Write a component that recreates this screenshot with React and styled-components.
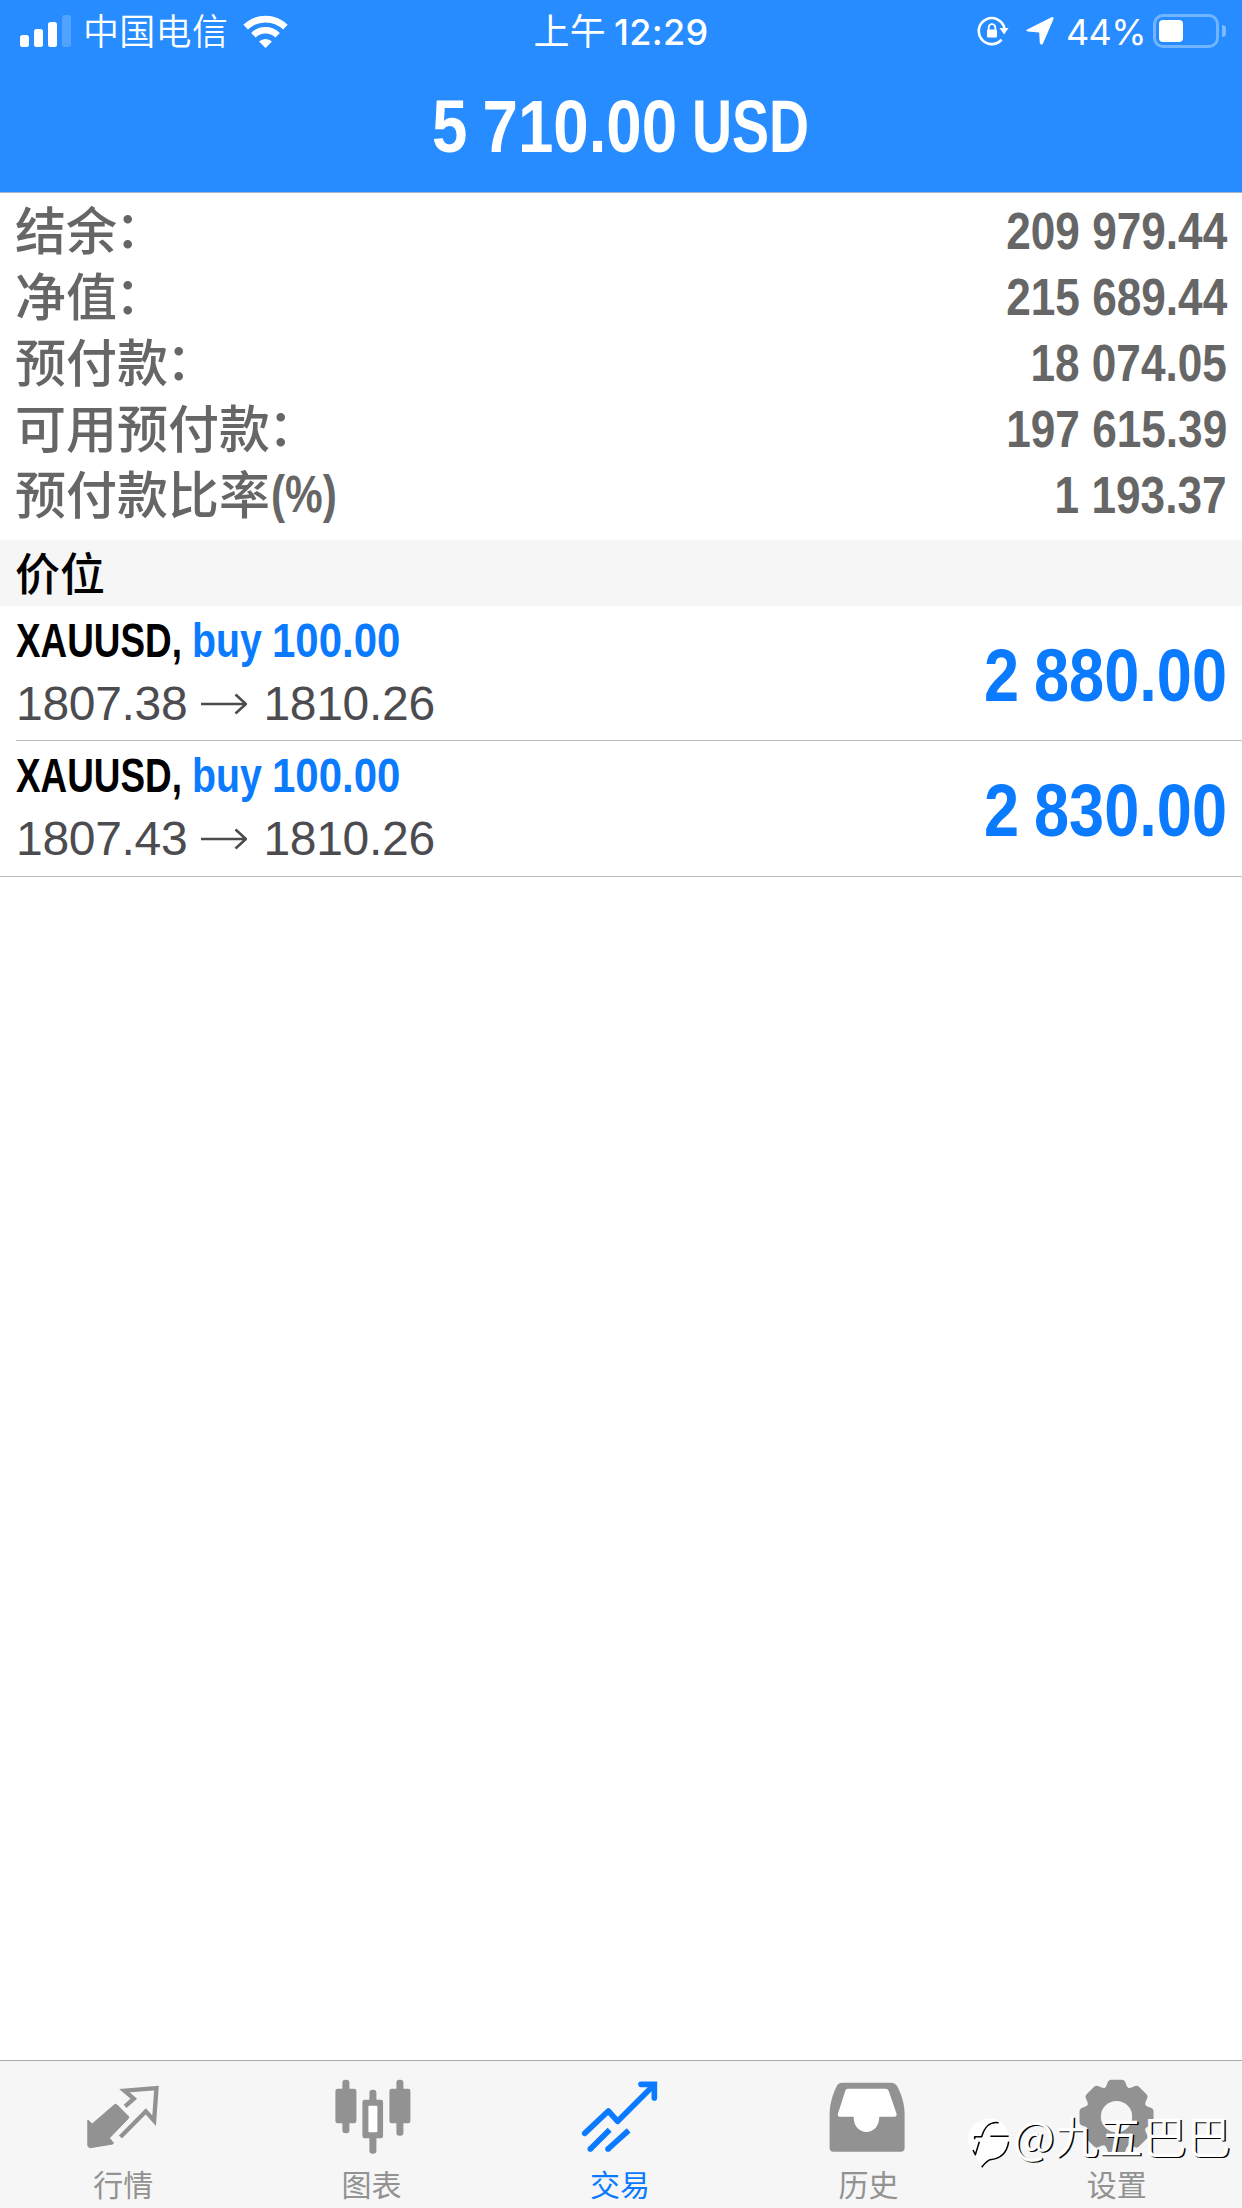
import React from "react";
import styled, { createGlobalStyle } from "styled-components";

const account = [
  { label: "结余", unit: "：", value: "209 979.44" },
  { label: "净值", unit: "：", value: "215 689.44" },
  { label: "预付款", unit: "：", value: "18 074.05" },
  { label: "可用预付款", unit: "：", value: "197 615.39" },
  { label: "预付款比率", unit: "(%)", value: "1 193.37" },
];

const positions = [
  { id: 1, symbol: "XAUUSD", side: "buy", volume: "100.00", open: "1807.38", now: "1810.26", profit: "2 880.00" },
  { id: 2, symbol: "XAUUSD", side: "buy", volume: "100.00", open: "1807.43", now: "1810.26", profit: "2 830.00" },
];

const tabs = [
  { name: "行情", icon: <QuotesIcon /> },
  { name: "图表", icon: <ChartIcon /> },
  { name: "交易", icon: <TradeIcon />, active: true },
  { name: "历史", icon: <HistoryIcon /> },
  { name: "设置", icon: <SettingsIcon /> },
];

function SignalIcon() {
  return (
    <svg width="51" height="32" viewBox="0 0 51 32" fill="#fff">
      <rect x="0" y="20" width="9" height="12" rx="2.5" />
      <rect x="14" y="14" width="9" height="18" rx="2.5" />
      <rect x="28" y="7" width="9" height="25" rx="2.5" />
      <rect x="42" y="0" width="9" height="32" rx="2.5" opacity="0.2" />
    </svg>
  );
}

function WifiIcon() {
  return (
    <svg width="45" height="33" viewBox="0 0 45 33" fill="none" stroke="#fff">
      <path d="M2.6 12.2a28.5 28.5 0 0 1 39.8 0" strokeWidth="6.6" />
      <path d="M10.4 20.2a17.4 17.4 0 0 1 24.2 0" strokeWidth="6.4" />
      <path d="M16 26.5a9.5 9.5 0 0 1 13 0L22.5 33z" fill="#fff" stroke="none" />
    </svg>
  );
}

function LockIcon() {
  return (
    <svg width="32" height="30" viewBox="0 0 32 30" fill="none" stroke="#fff">
      <path d="M24.6 23.6A13 13 0 1 1 27.4 12" strokeWidth="2.6" />
      <path d="M22.5 12h9l-4.4 6.5z" fill="#fff" stroke="none" />
      <rect x="10" y="13.5" width="10" height="8" rx="1" fill="#fff" stroke="none" />
      <path d="M11.7 14v-2.6a3.3 3.3 0 0 1 6.6 0V14" strokeWidth="1.8" />
    </svg>
  );
}

function LocationIcon() {
  return (
    <svg width="28" height="28" viewBox="0 0 28 28" fill="#fff">
      <path d="M1.2 12.6 25.5.3q2.6-.8 1.9 1.9L17 26.4q-2 2.6-3.2-.4l-.6-10.6-11.4-.8q-2.6-.8-.6-2z" />
    </svg>
  );
}

function QuotesIcon() {
  return (
    <svg width="80" height="80" viewBox="252.6 112 240 240" fill="none" stroke="currentColor">
      <path
        d="M264 241l13 12 67-58q4-3 8 1l33 33q4 4 0 8l-56 58 12 15-2 3-67 11q-8 0-8-8v-75z"
        fill="currentColor"
        strokeWidth="3"
        strokeLinejoin="round"
      />
      <path d="M376 200l26-23-28-24 96-8-7 98-25-28-76 77" strokeWidth="13" strokeLinejoin="miter" />
    </svg>
  );
}

function ChartIcon() {
  return (
    <svg width="80" height="80" viewBox="997.8 112 240 240" fill="currentColor">
      <rect x="1026" y="120" width="21" height="161" rx="9" />
      <rect x="1005" y="147" width="63" height="104" rx="7" />
      <rect x="1107" y="150" width="21" height="192" rx="9" />
      <rect x="1086" y="180" width="62" height="116" rx="7" />
      <rect x="1104" y="198" width="27" height="80" rx="3" fill="#fff" />
      <rect x="1188" y="120" width="21" height="168" rx="9" />
      <rect x="1167" y="147" width="63" height="104" rx="7" />
    </svg>
  );
}

function TradeIcon() {
  return (
    <svg
      width="80"
      height="80"
      viewBox="123 112 240 240"
      fill="none"
      stroke="currentColor"
      strokeWidth="17"
      strokeLinejoin="round"
    >
      <path d="M134 281l71-67 28 31 108-108" strokeLinecap="round" />
      <path d="M303 134h40v41" strokeLinecap="round" strokeLinejoin="miter" />
      <path d="M151 328l58-58M204 328l62-56" />
      <circle cx="151" cy="328" r="8.5" fill="currentColor" stroke="none" />
      <circle cx="204" cy="328" r="8.5" fill="currentColor" stroke="none" />
    </svg>
  );
}

function HistoryIcon() {
  return (
    <svg width="80" height="80" viewBox="868.2 112 240 240">
      <path
        d="M908 129h148q10 0 16 9c15 27 23 57 23 87v99q0 12-12 12H882q-12 0-12-12v-99c0-30 8-60 22-87q5-9 16-9z"
        fill="currentColor"
      />
      <path
        d="M925 147h113q6 0 9 6l24 69q1 9-7 9h-45c0 61-77 61-77 0h-41q-8 0-6-9l22-69q2-6 8-6z"
        fill="#fff"
      />
    </svg>
  );
}

function SettingsIcon() {
  return (
    <svg width="80" height="80" viewBox="413.4 112 240 240" fill="currentColor">
      {[0, 45, 90, 135, 180, 225, 270, 315].map((angle) => (
        <path
          key={angle}
          d="M485 150q12-4 16-18 3-12 12-12h32q9 0 12 12 4 14 16 18l-10 40h-68z"
          transform={`rotate(${angle} 529 231)`}
        />
      ))}
      <circle cx="529" cy="231" r="88" />
      <circle cx="529" cy="231" r="47" fill="#f7f7f7" />
    </svg>
  );
}

function ForumLogo() {
  return (
    <svg width="60" height="64" viewBox="0 0 180 192" fill="none" strokeLinejoin="round">
      <path d="M39 134C8 104 14 60 42 40c28-22 68-20 88 10 8 12 11 24 10 38-2 32-22 56-56 61-10 4-17 13-25 23z" fill="#fff" />
      <path d="M110 38c-28-4-42 12-51 42H38v8M52 95l-12 39-7-14M85 79h55" stroke="#000" strokeWidth="4.5" />
      <path d="M140 95c-5 32-24 52-56 54-10 4-17 13-25 23" stroke="#000" strokeWidth="4.5" />
    </svg>
  );
}

function App() {
  return (
    <Screen>
      <GlobalStyle />
      <Header>
        <StatusBar>
          <StatusLeft>
            <SignalIcon />
            <Carrier>中国电信</Carrier>
            <WifiIcon />
          </StatusLeft>
          <Clock>
            <span>上午</span>12:29
          </Clock>
          <StatusRight>
            <LockIcon />
            <LocationIcon />
            <Percent>44%</Percent>
            <Battery>
              <Charge style={{ width: "44%" }} />
            </Battery>
          </StatusRight>
        </StatusBar>
        <Total>
          <Condensed $scale={0.86} $width={260}>
            5 710.00
          </Condensed>
          <Condensed $scale={0.75} $width={119}>
            USD
          </Condensed>
        </Total>
      </Header>

      <Summary>
        {account.map((row) => (
          <SummaryRow key={row.label}>
            <Label>
              {row.label}
              {row.unit === "：" ? (
                <Colon>{row.unit}</Colon>
              ) : (
                <Unit $scale={0.83} $width={68}>
                  {row.unit}
                </Unit>
              )}
            </Label>
            <Value>{row.value}</Value>
          </SummaryRow>
        ))}
      </Summary>

      <SectionTitle>价位</SectionTitle>

      <div>
        {positions.map((item) => (
          <Position key={item.id}>
            <div>
              <Deal>
                <Condensed $scale={0.76} $width={176}>
                  {item.symbol},
                </Condensed>
                <Side>
                  <Condensed $scale={0.81} $width={79.5}>
                    {item.side}
                  </Condensed>
                  <Condensed $scale={0.865} $width={128}>
                    {item.volume}
                  </Condensed>
                </Side>
              </Deal>
              <Prices>
                {item.open}
                <svg width="46" height="22" viewBox="0 0 46 22" fill="none" stroke="#4c4c50" strokeWidth="2.6">
                  <path d="M0 11h45M34.5 1.5 45 11l-10.5 9.5" />
                </svg>
                {item.now}
              </Prices>
            </div>
            <Profit>{item.profit}</Profit>
          </Position>
        ))}
      </div>

      <TabBar>
        {tabs.map((tab) => (
          <Tab key={tab.name} $active={tab.active}>
            {tab.icon}
            <TabName>{tab.name}</TabName>
          </Tab>
        ))}
        <Watermark>
          <ForumLogo />
          <span>@九五巴巴</span>
        </Watermark>
      </TabBar>
    </Screen>
  );
}

const GlobalStyle = createGlobalStyle`
  body {
    margin: 0;
    background: #fff;
  }
  svg {
    display: block;
    flex-shrink: 0;
  }
`;

const Screen = styled.div`
  width: 1242px;
  height: 2208px;
  display: flex;
  flex-direction: column;
  background: #fff;
  overflow: hidden;
  font-family: "Liberation Sans", "Noto Sans CJK SC", sans-serif;
`;

const Header = styled.header`
  height: 192px;
  background: #268cff;
  border-bottom: 1px solid #a3b4cb;
  color: #fff;
`;

const StatusBar = styled.div`
  height: 60px;
  padding: 0 16px 0 20px;
  display: grid;
  grid-template-columns: 1fr auto 1fr;
  align-items: center;
  font-family: Inter, "Noto Sans CJK SC", sans-serif;
  font-size: 36px;
  line-height: 60px;
`;

const StatusLeft = styled.div`
  display: flex;
  align-items: center;
`;

const Carrier = styled.span`
  margin: 2px 15px 0 12px;
  font-weight: 350;
  letter-spacing: 0.3px;
`;

const Clock = styled.div`
  display: flex;
  padding-top: 2px;
  margin-right: 4px;
  font-weight: 500;
  letter-spacing: 0.3px;

  span {
    margin-right: 8px;
    font-weight: 400;
  }
`;

const StatusRight = styled.div`
  display: flex;
  align-items: center;
  justify-content: flex-end;

  svg + svg {
    margin-left: 17px;
  }
`;

const Percent = styled.span`
  margin: 2px 7px 0 12px;
  letter-spacing: -0.6px;
`;

const Battery = styled.div`
  position: relative;
  box-sizing: border-box;
  width: 66px;
  height: 34px;
  margin-right: 7px;
  padding: 3px;
  border: 3px solid rgba(255, 255, 255, 0.35);
  border-radius: 10px;

  &::after {
    content: "";
    position: absolute;
    top: 8px;
    right: -10px;
    width: 4px;
    height: 12px;
    border-radius: 0 6px 6px 0;
    background: rgba(255, 255, 255, 0.4);
  }
`;

const Charge = styled.div`
  height: 100%;
  border-radius: 4px;
  background: #fff;
`;

const Condensed = styled.span`
  display: inline-block;
  width: ${(props) => props.$width}px;
  white-space: nowrap;
  word-spacing: -3px;
  transform: scaleX(${(props) => props.$scale});
  transform-origin: left;
`;

const Unit = styled(Condensed)`
  margin-left: 1px;
  font-weight: 700;
  line-height: 62px;
`;

const Colon = styled.span`
  margin-left: -2px;
  line-height: 61px;
`;

const Total = styled.div`
  display: flex;
  justify-content: center;
  font-size: 74px;
  font-weight: 700;
  line-height: 134px;
`;

const Summary = styled.section`
  height: 341px;
  padding: 6px 15px 0;
  box-sizing: border-box;
  color: #666;
  font-size: 51px;
`;

const SummaryRow = styled.div`
  display: flex;
  justify-content: space-between;
  height: 66px;
  line-height: 66px;
`;

const Label = styled.span`
  display: flex;
  padding-top: 1px;
  font-weight: 500;
`;

const Value = styled.span`
  font-weight: 700;
  transform: scaleX(0.866);
  transform-origin: right;
`;

const SectionTitle = styled.h2`
  height: 66px;
  margin: 6px 0 0;
  padding-left: 15px;
  background: #f6f6f6;
  color: #000;
  font-size: 45px;
  font-weight: 500;
  line-height: 71px;
`;

const Position = styled.div`
  display: flex;
  justify-content: space-between;
  box-sizing: border-box;
  height: 135px;
  margin-left: 16px;
  padding: 3px 15px 0 0;
  border-bottom: 1px solid #bdbdbf;

  &:last-child {
    height: 136px;
    margin-left: 0;
    padding-left: 16px;
  }
`;

const Deal = styled.div`
  display: flex;
  color: #000;
  font-size: 48.5px;
  font-weight: 700;
  line-height: 62px;
`;

const Side = styled.span`
  display: flex;
  color: #0a7aff;
`;

const Prices = styled.div`
  display: flex;
  align-items: center;
  color: #4c4c50;
  font-size: 48px;
  line-height: 66px;
  letter-spacing: -0.3px;

  svg {
    margin: 0 16px 0 14px;
  }
`;

const Profit = styled.div`
  color: #0a7aff;
  font-size: 74px;
  font-weight: 700;
  line-height: 134px;
  word-spacing: -3px;
  transform: scaleX(0.853);
  transform-origin: right;
`;

const TabBar = styled.nav`
  position: relative;
  display: grid;
  grid-template-columns: repeat(5, 1fr);
  box-sizing: border-box;
  height: 148px;
  margin-top: auto;
  padding-top: 16px;
  border-top: 1px solid #a9aeab;
  background: #f6f6f6;
`;

const Tab = styled.div`
  display: flex;
  flex-direction: column;
  align-items: center;
  color: ${(props) => (props.$active ? "#0a7aff" : "#929292")};
`;

const TabName = styled.span`
  margin: 9px 2px 0 0;
  font-size: 30px;
  line-height: 40px;
`;

const Watermark = styled.div`
  position: absolute;
  top: 49px;
  left: 962px;
  display: flex;
  align-items: flex-start;
  color: #fff;
  font-family: "Noto Sans CJK SC", sans-serif;
  font-size: 44px;
  font-weight: 400;
  line-height: 60px;
  text-shadow: 1.4px 1.4px 0 #000;
  white-space: nowrap;

  span {
    margin: -5px 0 0 -9px;
  }
`;

export default App;
